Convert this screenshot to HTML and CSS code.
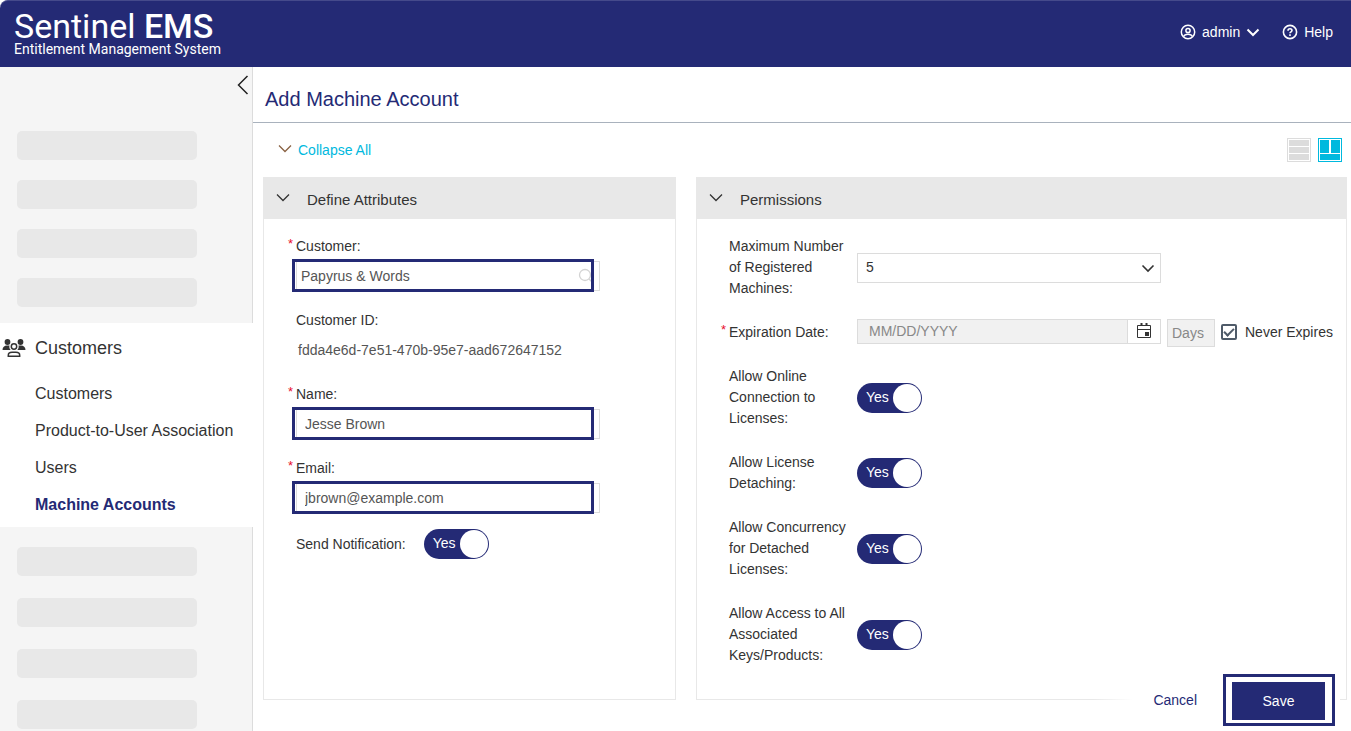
FILE: index.html
```
<!DOCTYPE html>
<html lang="en">
<head>
<meta charset="utf-8">
<title>Sentinel EMS - Add Machine Account</title>
<link rel="stylesheet" href="styles.css">
</head>
<body>
<header class="topbar">
  <div class="brand">
    <span class="brand-name">Sentinel <b>EMS</b></span>
    <span class="brand-sub">Entitlement Management System</span>
  </div>
  <nav class="topbar-links" aria-label="Account">
    <button type="button" class="topbar-link">
      <svg width="16" height="16" viewBox="0 0 16 16" fill="none" stroke="currentColor" stroke-width="1.5"><circle cx="8" cy="8" r="6.7"/><circle cx="8" cy="6.5" r="2.1"/><path d="M3.7 12.6c.6-1.7 1.9-2.3 4.3-2.3s3.700.6 4.300 2.300" /></svg>
      <span>admin</span>
      <svg width="14" height="14" viewBox="0 0 14 14" fill="none" stroke="currentColor" stroke-width="2"><path d="M1.500 4.500 7 10l5.500-5.500"/></svg>
    </button>
    <a href="#" class="topbar-link">
      <svg width="16" height="16" viewBox="0 0 16 16" fill="none" stroke="currentColor" stroke-width="1.600"><circle cx="8" cy="8" r="6.600"/><path d="M6 6.700C6 5.300 6.900 4.800 8 4.800s2 .700 2 1.700c0 1.400-2 1.300-2 2.800"/><path d="M8 10.300v1.600"/></svg>
      <span>Help</span>
    </a>
  </nav>
</header>
<div class="shell">
  <aside class="sidebar">
    <div class="side-block side-block-top">
      <button type="button" class="side-collapse" aria-label="Collapse sidebar">
        <svg width="12" height="20" viewBox="0 0 12 20" fill="none" stroke="currentColor" stroke-width="1.500"><path d="M10.500 1 1.500 10l9 9"/></svg>
      </button>
      <div class="bar"></div><div class="bar"></div><div class="bar"></div><div class="bar"></div>
    </div>
    <nav class="side-menu" aria-label="Customers">
      <a href="#" class="side-heading">
        <svg width="24" height="20" viewBox="0 0 24 20" fill="currentColor"><circle cx="5.500" cy="4" r="2.900"/><circle cx="18.500" cy="4" r="2.900"/><path d="M.500 12c0-3 2-4.500 4.500-4.500h2.500c-.500 1.700 0 3.300 1.200 4.500zM23.500 12c0-3-2-4.500-4.500-4.500h-2.500c.500 1.700 0 3.300-1.200 4.500z"/><g fill="none" stroke="currentColor" stroke-width="1.500"><circle cx="12" cy="8.500" r="2.700"/><path d="M6.300 18.200v-1c0-2 1.700-3 3.700-3h4c2 0 3.700 1 3.700 3v1z"/></g></svg>
        <span>Customers</span>
      </a>
      <ul class="side-items">
        <li><a href="#">Customers</a></li>
        <li><a href="#">Product-to-User Association</a></li>
        <li><a href="#">Users</a></li>
        <li><a href="#" class="current" aria-current="page">Machine Accounts</a></li>
      </ul>
    </nav>
    <div class="side-block side-block-bottom">
      <div class="bar"></div><div class="bar"></div><div class="bar"></div><div class="bar"></div>
    </div>
  </aside>
  <main class="content">
    <h1 class="page-title">Add Machine Account</h1>
    <div class="tools">
      <button type="button" class="collapse-all">
        <svg width="14" height="14" viewBox="0 0 14 14" fill="none" stroke="#8a6243" stroke-width="1.300"><path d="M1 2.500l6 6 6-6"/></svg>
        <span>Collapse All</span>
      </button>
      <div class="views">
        <button type="button" class="view" aria-label="Stacked layout">
          <svg width="24" height="24" viewBox="0 0 24 24" fill="currentColor"><path d="M0 0h24v24H0zM1 1v22h22V1z" fill-rule="evenodd"/><path d="M2 2h20v6H2zM2 9h20v6H2zM2 16h20v6H2z"/></svg>
        </button>
        <button type="button" class="view view-on" aria-label="Column layout">
          <svg width="24" height="24" viewBox="0 0 24 24" fill="currentColor"><path d="M0 0h24v24H0zM1 1v22h22V1z" fill-rule="evenodd"/><path d="M2 2h9v13H2zM13 2h9v13h-9zM2 16h20v6H2z"/></svg>
        </button>
      </div>
    </div>
    <form class="cards">
      <section class="card">
        <h2 class="card-head">
          <svg width="14" height="14" viewBox="0 0 14 14" fill="none" stroke="currentColor" stroke-width="1.300"><path d="M1 2.500l6 6 6-6"/></svg>
          <span>Define Attributes</span>
        </h2>
        <div class="attributes">
          <div class="field">
            <label class="required" for="customer">Customer:</label>
            <div class="box">
              <input id="customer" class="text text-search" type="text" value="Papyrus &amp; Words">
              <svg class="search" width="16" height="16" viewBox="0 0 16 16" fill="none" stroke="currentColor" stroke-width="1.300"><circle cx="7" cy="7" r="5.500"/><path d="M11 11l4 4"/></svg>
              <span class="mark"></span>
            </div>
          </div>
          <div class="field">
            <label for="customer-id">Customer ID:</label>
            <output id="customer-id" class="static">fdda4e6d-7e51-470b-95e7-aad672647152</output>
          </div>
          <div class="field">
            <label class="required" for="name">Name:</label>
            <div class="box">
              <input id="name" class="text" type="text" value="Jesse Brown">
              <span class="mark"></span>
            </div>
          </div>
          <div class="field">
            <label class="required" for="email">Email:</label>
            <div class="box">
              <input id="email" class="text" type="email" value="jbrown@example.com">
              <span class="mark"></span>
            </div>
          </div>
          <div class="field-inline">
            <label for="notify">Send Notification:</label>
            <span class="toggle"><input id="notify" type="checkbox" role="switch" checked><span>Yes</span></span>
          </div>
        </div>
      </section>
      <section class="card">
        <h2 class="card-head">
          <svg width="14" height="14" viewBox="0 0 14 14" fill="none" stroke="currentColor" stroke-width="1.300"><path d="M1 2.500l6 6 6-6"/></svg>
          <span>Permissions</span>
        </h2>
        <div class="permissions">
          <div class="row">
            <label for="max">Maximum Number of Registered Machines:</label>
            <div class="select">
              <select id="max"><option>5</option></select>
              <svg width="14" height="14" viewBox="0 0 14 14" fill="none" stroke="currentColor" stroke-width="1.600"><path d="M1.500 4.500 7 10l5.500-5.500"/></svg>
            </div>
          </div>
          <div class="row">
            <label class="required" for="expires">Expiration Date:</label>
            <div class="expiry">
              <div class="date">
                <input id="expires" type="text" placeholder="MM/DD/YYYY" disabled>
                <button type="button" aria-label="Open calendar">
                  <svg width="16" height="16" viewBox="0 0 16 16" fill="none" stroke="currentColor"><path d="M1.500 2.500h13v12h-13zM1.500 6.500h13"/><path d="M5.500 0v3M10.500 0v3" stroke-width="2"/><path d="M9 9h4v4H9z" fill="currentColor" stroke="none"/></svg>
                </button>
              </div>
              <input class="days" type="text" value="Days" aria-label="Days" disabled>
              <label class="never"><input type="checkbox" checked><span>Never Expires</span></label>
            </div>
          </div>
          <div class="row">
            <label for="online">Allow Online Connection to Licenses:</label>
            <span class="toggle"><input id="online" type="checkbox" role="switch" checked><span>Yes</span></span>
          </div>
          <div class="row">
            <label for="detach">Allow License Detaching:</label>
            <span class="toggle"><input id="detach" type="checkbox" role="switch" checked><span>Yes</span></span>
          </div>
          <div class="row">
            <label for="concurrency">Allow Concurrency for Detached Licenses:</label>
            <span class="toggle"><input id="concurrency" type="checkbox" role="switch" checked><span>Yes</span></span>
          </div>
          <div class="row">
            <label for="access">Allow Access to All Associated Keys/Products:</label>
            <span class="toggle"><input id="access" type="checkbox" role="switch" checked><span>Yes</span></span>
          </div>
        </div>
      </section>
    </form>
    <div class="actions">
      <button type="button" class="cancel">Cancel</button>
      <div class="save-frame"><button type="button" class="save">Save</button></div>
    </div>
  </main>
</div>
</body>
</html>
```
FILE: styles.css
```
:root {
  --navy: #242a75;
  --cyan: #00b9de;
  --line: #dcdcdc;
}

* { box-sizing: border-box; }

body {
  margin: 0;
  min-height: 100vh;
  display: flex;
  flex-direction: column;
  font: 14px/21px "Liberation Sans", Arial, sans-serif;
  color: #333;
  background: #fff;
}

button, input, select { font: inherit; color: inherit; }
button { padding: 0; border: 0; background: none; cursor: pointer; }
a { color: inherit; text-decoration: none; }
svg { display: block; flex: none; }

/* Top bar */
.topbar {
  display: flex;
  justify-content: space-between;
  align-items: center;
  height: 67px;
  padding: 0 18px 0 14px;
  border-top: 1px solid #454a8b;
  border-top-left-radius: 8px;
  background: var(--navy);
  color: #fff;
}
.brand { display: flex; flex-direction: column; padding-bottom: 6px; font-family: Roboto, sans-serif; }
.brand-name { font-size: 34px; line-height: 36px; }
.brand-name b { font-weight: 500; }
.brand-sub { font-size: 14px; line-height: 11px; }
.topbar-links { display: flex; gap: 22px; padding-bottom: 4px; }
.topbar-link { display: flex; align-items: center; gap: 6px; }

/* Sidebar */
.shell { flex: 1; display: flex; }
.sidebar { flex: none; width: 253px; display: flex; flex-direction: column; }
.side-block {
  display: flex;
  flex-direction: column;
  padding-left: 17px;
  border-right: 1px solid var(--line);
  background: #f5f5f5;
}
.side-block-top { gap: 20px; padding-bottom: 16px; }
.side-block-bottom { flex: 1; gap: 22px; padding-top: 20px; }
.side-collapse { align-self: flex-end; height: 44px; padding: 8px 3px 16px; color: #222; }
.bar { flex: none; width: 180px; height: 29px; border-radius: 5px; background: #e8e8e8; }
.side-menu { height: 204px; padding-top: 8px; background: #fff; }
.side-heading { display: flex; align-items: center; gap: 9px; height: 34px; padding-left: 2px; font-size: 18px; }
.side-items { margin: 10px 0 0; padding: 0 0 0 35px; list-style: none; font-size: 16px; line-height: 37px; }
.current { font-weight: bold; color: var(--navy); }

/* Page */
.content { position: relative; flex: 1; min-width: 0; }
.page-title {
  margin: 0;
  padding-left: 12px;
  height: 56px;
  line-height: 65px;
  border-bottom: 1px solid #a9b2bd;
  font-size: 20px;
  font-weight: normal;
  color: var(--navy);
}
.tools { display: flex; justify-content: space-between; align-items: center; height: 54px; padding: 0 9px 0 25px; }
.collapse-all { display: flex; align-items: center; gap: 6px; color: var(--cyan); }
.views { display: flex; gap: 7px; }
.view { color: #dcdcdc; }
.view-on { color: var(--cyan); }

/* Cards */
.cards { display: grid; grid-template-columns: 413fr 651fr; gap: 20px; padding: 0 4px 0 10px; }
.card { min-width: 0; border: 1px solid #e8e8e8; }
.card-head {
  display: flex;
  align-items: center;
  gap: 17px;
  margin: 0;
  height: 41px;
  padding: 1px 12px 0;
  background: #e8e8e8;
  font-size: 15px;
  font-weight: normal;
}
.required { position: relative; }
.required::before { content: "*"; position: absolute; left: -8px; top: -3px; font-size: 13px; color: #e8112d; }

.attributes { padding: 17px 75px 32px 32px; }
.field { display: flex; flex-direction: column; align-items: flex-start; gap: 4px; margin-bottom: 19px; }
.box { position: relative; align-self: stretch; }
.text {
  display: block;
  width: 100%;
  height: 30px;
  padding: 0 8px;
  border: 1px solid var(--line);
  background: #fff;
  color: #555;
}
.text-search { padding: 0 4px; }
.search { position: absolute; top: 7px; right: 6px; color: #d3d3d3; }
/* Highlight frame drawn over the field */
.mark { position: absolute; inset: -2px 6px -1px -4px; border: 3px solid var(--navy); pointer-events: none; }
.static { padding: 0 2px; line-height: 30px; color: #555; }
.field-inline { display: flex; align-items: center; gap: 18px; height: 24px; }

.permissions { display: flex; flex-direction: column; gap: 23px; padding: 17px 12px 33px 32px; }
.row { display: grid; grid-template-columns: 124px 1fr; column-gap: 4px; align-items: center; }
.select { position: relative; width: 304px; }
.select select {
  display: block;
  width: 100%;
  height: 30px;
  padding: 0 8px;
  border: 1px solid var(--line);
  border-radius: 0;
  background: #fff;
  appearance: none;
}
.select svg { position: absolute; top: 8px; right: 6px; pointer-events: none; }
.expiry { display: flex; align-items: flex-start; margin: -4px 0; }
.date { display: flex; width: 304px; height: 25px; border: 1px solid var(--line); }
.date input { flex: 1; min-width: 0; padding: 0 11px; border: 0; background: #f1f1f1; }
.date input::placeholder { color: #888; }
.date button { display: grid; place-items: center; width: 33px; border-left: 1px solid var(--line); }
.days { width: 48px; height: 28px; margin: 0 6px; padding: 0 4px; border: 1px solid var(--line); background: #f1f1f1; color: #888; }
.never { display: flex; align-items: center; gap: 8px; height: 27px; white-space: nowrap; }
.never input {
  appearance: none;
  display: grid;
  place-items: center;
  width: 16px;
  height: 16px;
  margin: 0;
  border: 2px solid #4f5b69;
  border-radius: 2px;
}
.never input:checked::before {
  content: "";
  width: 8px;
  height: 4px;
  margin-bottom: 2px;
  border: solid #4f5b69;
  border-width: 0 0 2px 2px;
  transform: rotate(-45deg);
}

/* Switch */
.toggle { position: relative; display: block; width: 65px; height: 30px; }
.toggle input {
  appearance: none;
  display: flex;
  justify-content: flex-end;
  width: 100%;
  height: 100%;
  margin: 0;
  padding: 1px;
  border-radius: 15px;
  background: var(--navy);
}
.toggle input::before { content: ""; width: 28px; height: 28px; border-radius: 50%; background: #fff; }
.toggle span { position: absolute; left: 9px; top: 4px; color: #fff; pointer-events: none; }

/* Footer actions float over the bottom edge of the cards */
.actions {
  position: absolute;
  right: 11px;
  bottom: 0;
  display: flex;
  align-items: center;
  gap: 26px;
  padding: 4px 5px 5px 60px;
  background: linear-gradient(to right, transparent, #fff 40px);
}
.cancel { color: var(--navy); }
.save-frame { padding: 5px 7px 3px 6px; border: 3px solid var(--navy); }
.save { display: block; width: 93px; height: 38px; background: var(--navy); color: #fff; }
```
